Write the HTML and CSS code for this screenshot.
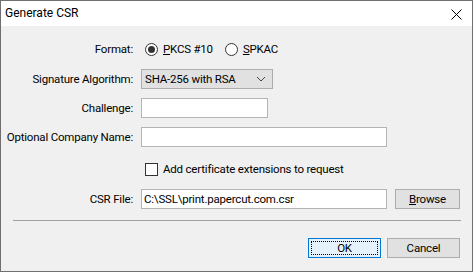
FILE: index.html
```html
<!DOCTYPE html>
<html lang="en">

<head>
  <meta charset="UTF-8" />
  <title>Generate CSR</title>
  <link rel="stylesheet" href="styles.css">
</head>

<body>

  <div class="dialog">
    <div class="titlebar">
      <span class="title">Generate CSR</span>
      <svg class="close" width="11" height="11" viewBox="0 0 11 11">
        <path d="M0.5 0.5 L10.5 10.5 M10.5 0.5 L0.5 10.5" stroke="#000" stroke-width="1" fill="none" />
      </svg>
    </div>

    <div class="content">
      <div class="row row-format">
        <label class="lbl">Format:</label>
        <div class="ctl">
          <span class="radio checked"></span><span class="opt"><u>P</u>KCS #10</span>
          <span class="radio second"></span><span class="opt"><u>S</u>PKAC</span>
        </div>
      </div>

      <div class="row row-sig">
        <label class="lbl">Signature Algorithm:</label>
        <div class="ctl">
          <div class="select">
            <span>SHA-256 with RSA</span>
            <svg width="10" height="6" viewBox="0 0 10 6">
              <path d="M1 1 L5 5 L9 1" stroke="#444" stroke-width="1" fill="none" />
            </svg>
          </div>
        </div>
      </div>

      <div class="row row-chal">
        <label class="lbl">Challenge:</label>
        <div class="ctl"><div class="input short"></div></div>
      </div>

      <div class="row row-comp">
        <label class="lbl">Optional Company Name:</label>
        <div class="ctl"><div class="input long"></div></div>
      </div>

      <div class="row row-check">
        <label class="lbl"></label>
        <div class="ctl">
          <span class="checkbox"></span><span class="opt">Add certificate extensions to request</span>
        </div>
      </div>

      <div class="row row-file">
        <label class="lbl">CSR File:</label>
        <div class="ctl">
          <div class="input long">C:\SSL\print.papercut.com.csr</div>
          <button class="btn browse"><u>B</u>rowse</button>
        </div>
      </div>

      <div class="separator"></div>

      <div class="actions">
        <button class="btn ok"><span class="focus">OK</span></button>
        <button class="btn">Cancel</button>
      </div>
    </div>
  </div>

</body>

</html>
```

FILE: styles.css
```css
body {
  margin: 0;
  font-family: Roboto, "Liberation Sans", sans-serif;
  font-size: 11.5px;
  letter-spacing: -0.2px;
  color: #000;
  background: #f0f0f0;
}

.dialog {
  width: 471px;
  height: 270px;
  border: 1px solid #6f6f6f;
  background-color: #f0f0f0;
  display: flex;
  flex-direction: column;
}

.titlebar {
  height: 25px;
  background-color: white;
  display: flex;
  align-items: center;
  justify-content: space-between;
  padding: 0 10px 0 4px;
}

.title {
  font-size: 12px;
  letter-spacing: 0;
  margin-top: -1px;
}

.close {
  margin-top: 1px;
}

.content {
  display: flex;
  flex-direction: column;
}

.row {
  display: flex;
  align-items: center;
  height: 20px;
}

.lbl {
  width: 132px;
  text-align: right;
  flex-shrink: 0;
  white-space: nowrap;
}

.ctl {
  display: flex;
  align-items: center;
  margin-left: 8px;
}

.row-format { margin-top: 13px; }
.row-sig { margin-top: 10px; }
.row-chal { margin-top: 9px; }
.row-comp { margin-top: 9px; }
.row-check { margin-top: 12px; }
.row-file { margin-top: 10px; }

.radio {
  width: 11px;
  height: 11px;
  border: 1px solid #333;
  border-radius: 50%;
  background: white;
  margin-left: 4px;
  position: relative;
}

.radio.checked::after {
  content: "";
  position: absolute;
  left: 2px;
  top: 2px;
  width: 7px;
  height: 7px;
  border-radius: 50%;
  background: #333;
}

.radio.second {
  margin-left: 12px;
}

.opt {
  margin-left: 5px;
}

.select {
  height: 18px;
  border: 1px solid #adadad;
  background-color: #e1e1e1;
  display: flex;
  align-items: center;
  justify-content: space-between;
  padding: 0 6px 0 3px;
  box-sizing: content-box;
  width: 121px;
}

.input {
  height: 18px;
  border: 1px solid #b4b4b4;
  background: white;
  display: flex;
  align-items: center;
  padding-left: 2px;
  box-sizing: content-box;
}

.input.short {
  width: 123px;
}

.input.long {
  width: 242px;
}

.checkbox {
  width: 11px;
  height: 11px;
  border: 1px solid #333;
  background: white;
  margin-left: 4px;
}

.btn {
  font-family: inherit;
  font-size: inherit;
  letter-spacing: inherit;
  color: #000;
  background-color: #e1e1e1;
  border: 1px solid #adadad;
  height: 20px;
  width: 73px;
  padding: 0;
}

.browse {
  width: 65px;
  margin-left: 8px;
}

.separator {
  margin: 11px 11px 0 12px;
  border-top: 1px solid #a0a0a0;
}

.actions {
  display: flex;
  justify-content: flex-end;
  gap: 6px;
  margin-top: 17px;
  padding-right: 12px;
}

.ok {
  background-color: #e5f1fb;
  border-color: #0078d7;
  padding: 2px;
}

.focus {
  display: flex;
  align-items: center;
  justify-content: center;
  height: 100%;
  border: 1px dotted #000;
  box-sizing: border-box;
}
```
